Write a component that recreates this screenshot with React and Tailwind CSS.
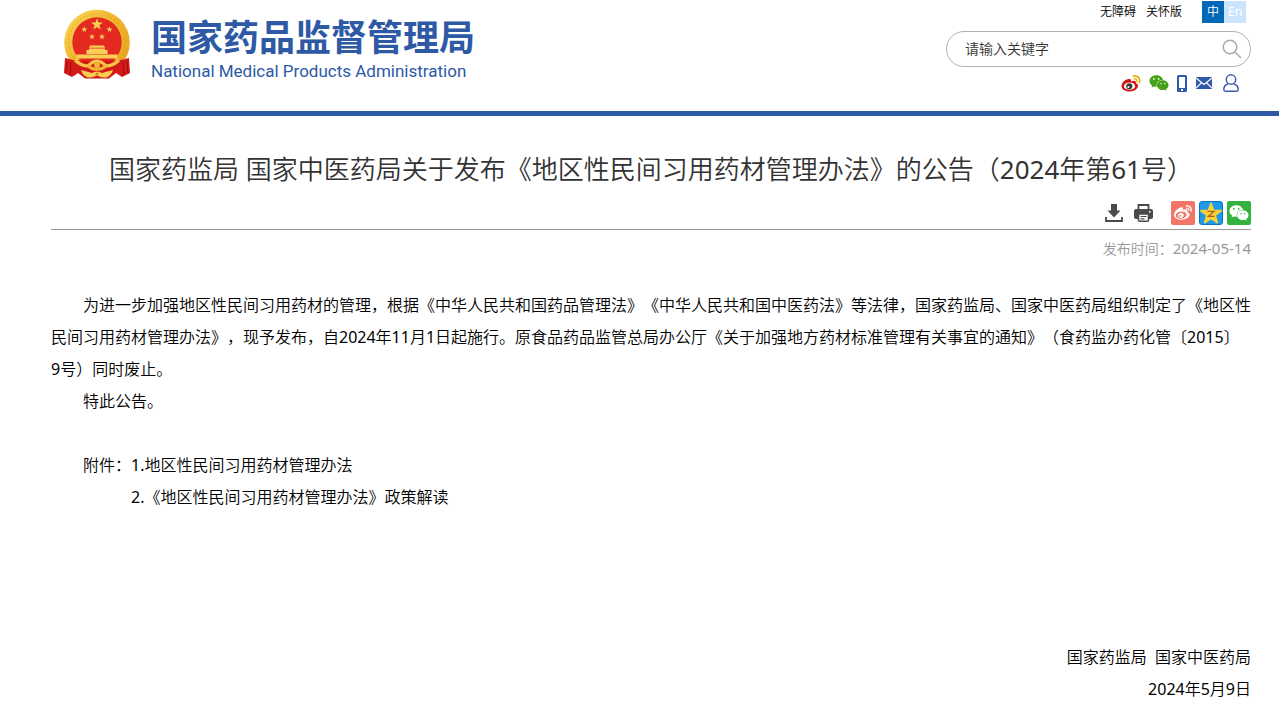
import { FaWeibo, FaWeixin } from 'react-icons/fa';

const STAR = 'M0,-10 L2.4,-3.1 9.5,-3.1 3.8,1.2 5.9,8.1 0,4 -5.9,8.1 -3.8,1.2 -9.5,-3.1 -2.4,-3.1 Z';

const Emblem = () => (
  <svg viewBox="0 0 66 72" className="w-[66px] h-[72px]" aria-hidden="true">
    <defs>
      <linearGradient id="gold" x1="0" y1="0" x2="1" y2="1">
        <stop offset="0" stopColor="#fbd75a" />
        <stop offset="0.5" stopColor="#f0b32a" />
        <stop offset="1" stopColor="#e2a024" />
      </linearGradient>
    </defs>
    {/* wreath */}
    <circle cx="33" cy="33.500" r="32.800" fill="url(#gold)" />
    <circle cx="33" cy="33.500" r="28.500" fill="none" stroke="#dc9c1f" strokeWidth="1.500" strokeDasharray="2 2" opacity="0.4" />
    <circle cx="33" cy="33" r="24.700" fill="#e42a20" />
    <g fill="#f9cf57">
      <path d={STAR} transform="translate(33 15.500) scale(0.62)" />
      <path d={STAR} transform="translate(20.300 20.500) scale(0.32)" />
      <path d={STAR} transform="translate(45.500 20.500) scale(0.32)" />
      <path d={STAR} transform="translate(28 27.700) scale(0.32)" />
      <path d={STAR} transform="translate(38 27.700) scale(0.32)" />
      {/* gate */}
      <path d="M26 36.500 h14 l1 2.200 h-16 Z" />
      <path d="M25 39.500 h16 v1.500 h2.500 v4 h-21 v-4 h2.500 Z" />
      <path d="M12 45.500 h42 l-1 4 h-40 Z" />
    </g>
    {/* red drapes */}
    <path d="M1 49 L9 51 L25 52 L33 54 L41 52 L57 51 L65 49 L66 64 L58 68 L52 64 L45 69.500 H21 L14 64 L8 68 L0 64 Z" fill="#d41a18" />
    <path d="M3 52 L2 64 M7 53 L6 66 M59 53 L60 66 M63 52 L64 64" stroke="#9f0c0e" strokeWidth="1" />
    {/* ribbons and gear */}
    <path d="M11 51 Q17 57 24 57 Q29 52 33 52 Q37 52 42 57 Q49 57 55 51" fill="none" stroke="#f6c646" strokeWidth="3.200" />
    <path d="M24 57 Q29 61 33 60 Q37 61 42 57" fill="none" stroke="#eeb433" strokeWidth="3.200" />
    <circle cx="33" cy="56" r="3" fill="#f0b63a" />
    <path d="M17 61 Q25 63 28 64 Q33 61 38 64 Q41 63 49 61 Q47 67 42 68.500 Q37 69 33 66.500 Q29 69 24 68.500 Q19 67 17 61 Z" fill="#f8cd50" />
    <circle cx="33" cy="65" r="1.500" fill="#dd8c20" />
  </svg>
);

const WeiboColor = () => (
  <svg viewBox="0 0 20 17" className="w-5 h-[17px]" aria-hidden="true">
    <path d="M8 4 C5.500 3.500 0.500 7.500 0.500 11 C0.500 14 4 16.500 8.500 16.500 C13.500 16.500 17 13.600 17 10.800 C17 9.300 15.800 8.600 14.800 8.200 C15.500 6 14 5 10 6.500 C10.500 5 9.800 4.200 8 4 Z" fill="#d40f14" />
    <ellipse cx="8.500" cy="11.200" rx="5.600" ry="3.700" fill="#fff" />
    <circle cx="8.300" cy="11.300" r="3.100" fill="#3a3a3a" />
    <circle cx="7.400" cy="12" r="1" fill="#fff" />
    <path d="M12.500 1.200 C16.500 0.300 19.600 3.500 18.400 7.300" fill="none" stroke="#eeb111" strokeWidth="1.800" strokeLinecap="round" />
    <path d="M13.200 3.900 C15 3.500 16.300 4.900 15.800 6.600" fill="none" stroke="#eeb111" strokeWidth="1.400" strokeLinecap="round" />
  </svg>
);

const PhoneIcon = () => (
  <svg viewBox="0 0 10 17" className="w-[10px] h-[17px]" aria-hidden="true">
    <rect x="0" y="0" width="10" height="17" rx="1.500" fill="#2d59a5" />
    <rect x="2" y="2" width="6" height="11" fill="#fff" />
    <rect x="4" y="14" width="2" height="2" fill="#fff" />
  </svg>
);

const MailIcon = () => (
  <svg viewBox="0 0 16 12" className="w-4 h-3" aria-hidden="true">
    <rect width="16" height="12" fill="#2d59a5" />
    <path d="M0 1 L8 7.500 L16 1 M0 11 L5.500 5.800 M16 11 L10.500 5.800" fill="none" stroke="#fff" strokeWidth="1.200" />
  </svg>
);

const UserIcon = () => (
  <svg viewBox="0 0 16 18" className="w-4 h-[18px]" fill="none" stroke="#3c5fa9" strokeWidth="1.500" aria-hidden="true">
    <circle cx="8" cy="5.500" r="4.700" />
    <path d="M5 10 C2 11 0.800 13 0.800 15.500 C0.800 16.700 1.500 17.200 2.500 17.200 H13.500 C14.500 17.200 15.200 16.700 15.200 15.500 C15.200 13 14 11 11 10" />
  </svg>
);

const SearchIcon = () => (
  <svg viewBox="0 0 20 20" className="w-5 h-5" fill="none" stroke="#aaa" strokeWidth="1.500" aria-hidden="true">
    <circle cx="8" cy="8" r="6.800" />
    <path d="M13 13 L19 19" />
  </svg>
);

const DownloadIcon = () => (
  <svg viewBox="0 0 18 18" className="w-[18px] h-[18px]" aria-hidden="true">
    <path d="M6 0 H12 V6.500 H15.500 L9 13.500 L2.500 6.500 H6 Z" fill="#4a4a4a" />
    <path d="M1 13 V17 H17 V13" fill="none" stroke="#4a4a4a" strokeWidth="1.800" />
  </svg>
);

const PrintIcon = () => (
  <svg viewBox="0 0 19 18" className="w-[19px] h-[18px]" fill="none" stroke="#4a4a4a" aria-hidden="true">
    <path d="M4.500 6 V1 H14.500 V6" strokeWidth="1.800" />
    <rect x="0" y="5" width="19" height="10" rx="2" fill="#4a4a4a" stroke="none" />
    <rect x="4.500" y="10" width="10" height="7.200" rx="1" fill="#fff" strokeWidth="1.600" />
    <path d="M6.500 12.500 H12.500 M6.500 14.800 H10.500" strokeWidth="1.200" />
    <circle cx="15.800" cy="7.800" r="0.900" fill="#fff" stroke="none" />
  </svg>
);

const QzoneIcon = () => (
  <svg viewBox="0 0 24 24" className="w-6 h-6" aria-hidden="true">
    <rect x="0.500" y="0.500" width="23" height="23" rx="2.500" fill="#1f9ae8" stroke="#0e74bd" />
    <path d={STAR} transform="translate(12 13) scale(1.050)" fill="#fdd03a" stroke="#fdd03a" strokeWidth="1.800" strokeLinejoin="round" />
    <path d="M8.500 10.300 H15 L9.500 15.300 H15.500" fill="none" stroke="#a8630f" strokeWidth="1.300" />
  </svg>
);

const App = () => {
  return (
    <div className="bg-white text-black font-['Noto_Sans','Noto_Sans_CJK_SC_DemiLight','Noto_Sans_CJK_SC',sans-serif] [text-spacing-trim:space-all]">
      <header className="border-b-5 border-[#2d59a5]">
        <div className="flex justify-between h-[111px] pl-16 pr-7">
          <a href="#" className="flex items-start gap-[21px] pt-[9px] text-[#2d59a5]">
            <Emblem />
            <span className="flex flex-col pt-2">
              <span className="text-[36px] leading-[42px] font-bold font-['Noto_Sans','Noto_Sans_CJK_SC',sans-serif]">国家药品监督管理局</span>
              <span className="text-[17px] leading-6 font-['Roboto',sans-serif]">National Medical Products Administration</span>
            </span>
          </a>

          <div className="flex flex-col items-end w-[305px]">
            <nav className="flex items-center h-6 gap-[10px] text-xs pr-[5px]">
              <a href="#">无障碍</a>
              <a href="#">关怀版</a>
              <span className="flex ml-[10px] text-white leading-[22px] text-center">
                <a href="#" className="w-[22px] bg-[#0068b7]">中</a>
                <a href="#" className="w-[22px] bg-[#cce5ff]">En</a>
              </span>
            </nav>
            <form className="flex items-center w-full h-9 mt-[7px] pl-[18px] pr-2 border border-[#b0b0b0] rounded-full">
              <input
                type="text"
                aria-label="请输入关键字"
                placeholder="请输入关键字"
                className="flex-1 min-w-0 text-sm outline-none placeholder:text-[#333]"
              />
              <button type="button" aria-label="搜索"><SearchIcon /></button>
            </form>
            <div className="flex items-center h-[18px] mt-[7px] pr-3">
              <a href="#" aria-label="微博"><WeiboColor /></a>
              <a href="#" aria-label="微信" className="ml-2"><FaWeixin className="w-5 h-5 text-[#45a217]" /></a>
              <a href="#" aria-label="手机版" className="ml-2"><PhoneIcon /></a>
              <a href="#" aria-label="邮箱" className="ml-[9px]"><MailIcon /></a>
              <a href="#" aria-label="个人中心" className="ml-[11px]"><UserIcon /></a>
            </div>
          </div>
        </div>
      </header>

      <main className="pl-[51px] pr-7">
        <h1 className="pt-[34px] text-[26px] leading-[38px] text-center text-[#333]">
          国家药监局 国家中医药局关于发布《地区性民间习用药材管理办法》的公告（2024年第61号）
        </h1>

        <div className="flex justify-end items-end h-[42px] pb-1 border-b border-[#999]">
          <button type="button" aria-label="下载" className="pb-[3px]"><DownloadIcon /></button>
          <button type="button" aria-label="打印" className="ml-[11px] pb-[3px]"><PrintIcon /></button>
          <div className="flex gap-1 ml-[18px]">
            <a href="#" aria-label="分享到微博" className="flex items-center justify-center w-6 h-6 rounded-xs bg-[#f27568]">
              <FaWeibo className="w-[18px] h-[18px] text-white" />
            </a>
            <a href="#" aria-label="分享到QQ空间"><QzoneIcon /></a>
            <a href="#" aria-label="分享到微信" className="flex items-center justify-center w-6 h-6 rounded-xs bg-[#34b240]">
              <FaWeixin className="w-5 h-5 text-white" />
            </a>
          </div>
        </div>

        <p className="pt-[7px] text-sm leading-[22px] text-right text-[#999]">
          发布时间：<span className="text-[15px]">2024-05-14</span>
        </p>

        <article className="pt-[29px] text-base leading-8">
          <p className="indent-8">
            为进一步加强地区性民间习用药材的管理，根据《中华人民共和国药品管理法》《中华人民共和国中医药法》等法律，国家药监局、国家中医药局组织制定了《地区性民间习用药材管理办法》，现予发布，自2024年11月1日起施行。原食品药品监管总局办公厅《关于加强地方药材标准管理有关事宜的通知》（食药监办药化管〔2015〕<span className="inline-block indent-0">9号）</span>同时废止。
          </p>
          <p className="indent-8">特此公告。</p>

          <div className="flex pt-8 pl-8">
            <span>附件：</span>
            <ul>
              <li><a href="#">1.地区性民间习用药材管理办法</a></li>
              <li><a href="#">2.《地区性民间习用药材管理办法》政策解读</a></li>
            </ul>
          </div>

          <div className="pt-32 text-right">
            <p className="whitespace-pre">国家药监局  国家中医药局</p>
            <p>2024年5月9日</p>
          </div>
        </article>
      </main>
    </div>
  );
};

export default App;
